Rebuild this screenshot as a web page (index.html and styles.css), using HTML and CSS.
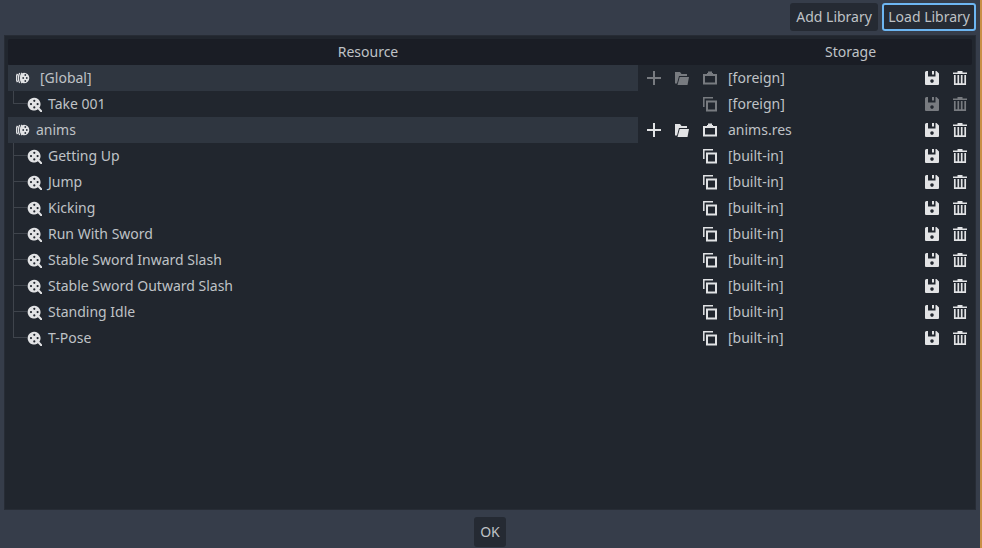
FILE: index.html
```html
<!DOCTYPE html>
<html lang="en">
<head>
<meta charset="utf-8">
<title>Animation Libraries</title>
<link rel="stylesheet" href="styles.css">
</head>
<body>
<svg class="defs" width="0" height="0" aria-hidden="true">
  <defs>
    <symbol id="i-anim" viewBox="0 0 16 16">
      <path fill="currentColor" fill-rule="evenodd" d="M7.300 1.800a6.400 6.400 0 0 1 5.100 10l2.600 2.700V16h-1.500l-2.600-2.700A6.400 6.400 0 1 1 7.300 1.800zM7.300 3.700a1.100 1.100 0 1 0 0 2.200 1.100 1.100 0 0 0 0-2.200zM4 7a1.100 1.100 0 1 0 0 2.200A1.100 1.100 0 0 0 4 7zM10.600 7a1.100 1.100 0 1 0 0 2.200 1.100 1.100 0 0 0 0-2.200zM7.300 10.300a1.100 1.100 0 1 0 0 2.200 1.100 1.100 0 0 0 0-2.200z"/>
    </symbol>
    <symbol id="i-lib" viewBox="0 0 16 16">
      <path fill="currentColor" fill-rule="evenodd" d="M8 2.700a5.300 5.300 0 1 1 0 10.600 4 5.300 0 0 1 0-10.600zM9.300 4.100a.9.9 0 1 0 0 1.800.9.9 0 0 0 0-1.800zM7.200 7.100a.9.9 0 1 0 0 1.800.9.9 0 0 0 0-1.800zM10.800 7.100a.9.9 0 1 0 0 1.800.9.9 0 0 0 0-1.800zM9.300 10.100a.9.9 0 1 0 0 1.800.9.9 0 0 0 0-1.800z"/>
      <path fill="none" stroke="currentColor" stroke-width="1.400" d="M6 2.800C4.300 5.500 4.300 10.500 6 13.200M3.700 3C2 5.700 2 10.300 3.700 13M1.500 3.800C.2 6.200.2 9.800 1.500 12.200"/>
    </symbol>
    <symbol id="i-plus" viewBox="0 0 16 16">
      <path fill="none" stroke="currentColor" stroke-width="2" d="M8 1v14M1 8h14"/>
    </symbol>
    <symbol id="i-folder" viewBox="0 0 16 16">
      <path fill="currentColor" d="M1 2h5l1.500 2H13v2H5L3 13.500H1z"/>
      <path fill="currentColor" d="M5.700 7H15l-1.500 8H3.500z"/>
    </symbol>
    <symbol id="i-paste" viewBox="0 0 16 16">
      <path fill="currentColor" fill-rule="evenodd" d="M6 1.500h4V3h1v1h4v10.500H1V4h4V3h1zM3 6v6.500h10V6z"/>
    </symbol>
    <symbol id="i-copy" viewBox="0 0 16 16">
      <path fill="none" stroke="currentColor" stroke-width="2" d="M5 5.500h9v9H5z"/>
      <path fill="none" stroke="currentColor" stroke-width="1.500" d="M11 1.800H1.800V11"/>
    </symbol>
    <symbol id="i-save" viewBox="0 0 16 16">
      <path fill="currentColor" fill-rule="evenodd" d="M2.500 1H4v5.500h7.500V1h1L15 3.500V14a1 1 0 0 1-1 1H2a1 1 0 0 1-1-1V2.500A1.500 1.500 0 0 1 2.500 1zM8 9.300a1.800 1.800 0 1 0 0 3.600 1.800 1.800 0 0 0 0-3.600zM8 1h2v3.500H8z"/>
    </symbol>
    <symbol id="i-trash" viewBox="0 0 16 16">
      <path fill="currentColor" d="M5.500 1h5v1.500H15V4H1V2.500h4.500z"/>
      <path fill="none" stroke="currentColor" stroke-width="1.700" d="M2.800 5v9.200h10.400V5M6.300 5v9M9.700 5v9"/>
    </symbol>
  </defs>
</svg>
<div class="window">
  <div class="topbar">
    <button class="btn btn-add">Add Library</button>
    <button class="btn btn-focus">Load Library</button>
  </div>
  <div class="panel">
    <div class="tree">
      <div class="row head">
        <div class="cell-res">Resource</div>
        <div class="cell-store">Storage</div>
      </div>

      <div class="row">
        <div class="cell-name lib-bg">
          <svg class="ico lib-ico"><use href="#i-lib"/></svg><span class="lib-name">[Global]</span>
        </div>
        <div class="acts dim">
          <svg class="ico"><use href="#i-plus"/></svg><svg class="ico"><use href="#i-folder"/></svg><svg class="ico"><use href="#i-paste"/></svg>
        </div>
        <div class="store">[foreign]</div>
        <div class="end"><svg class="ico"><use href="#i-save"/></svg><svg class="ico"><use href="#i-trash"/></svg></div>
      </div>

      <div class="row">
        <div class="cell-name"><span class="guide first"></span><svg class="ico"><use href="#i-anim"/></svg><span class="anim-name">Take 001</span></div>
        <div class="acts dim"><span class="slot"></span><span class="slot"></span><svg class="ico"><use href="#i-copy"/></svg></div>
        <div class="store">[foreign]</div>
        <div class="end dim"><svg class="ico"><use href="#i-save"/></svg><svg class="ico"><use href="#i-trash"/></svg></div>
      </div>

      <div class="row">
        <div class="cell-name lib-bg">
          <svg class="ico lib-ico"><use href="#i-lib"/></svg><span class="lib-name tight">anims</span>
        </div>
        <div class="acts">
          <svg class="ico"><use href="#i-plus"/></svg><svg class="ico"><use href="#i-folder"/></svg><svg class="ico"><use href="#i-paste"/></svg>
        </div>
        <div class="store">anims.res</div>
        <div class="end"><svg class="ico"><use href="#i-save"/></svg><svg class="ico"><use href="#i-trash"/></svg></div>
      </div>

      <div class="row">
        <div class="cell-name"><span class="guide first"></span><svg class="ico"><use href="#i-anim"/></svg><span class="anim-name">Getting Up</span></div>
        <div class="acts"><span class="slot"></span><span class="slot"></span><svg class="ico"><use href="#i-copy"/></svg></div>
        <div class="store">[built-in]</div>
        <div class="end"><svg class="ico"><use href="#i-save"/></svg><svg class="ico"><use href="#i-trash"/></svg></div>
      </div>
      <div class="row">
        <div class="cell-name"><span class="guide"></span><svg class="ico"><use href="#i-anim"/></svg><span class="anim-name">Jump</span></div>
        <div class="acts"><span class="slot"></span><span class="slot"></span><svg class="ico"><use href="#i-copy"/></svg></div>
        <div class="store">[built-in]</div>
        <div class="end"><svg class="ico"><use href="#i-save"/></svg><svg class="ico"><use href="#i-trash"/></svg></div>
      </div>
      <div class="row">
        <div class="cell-name"><span class="guide"></span><svg class="ico"><use href="#i-anim"/></svg><span class="anim-name">Kicking</span></div>
        <div class="acts"><span class="slot"></span><span class="slot"></span><svg class="ico"><use href="#i-copy"/></svg></div>
        <div class="store">[built-in]</div>
        <div class="end"><svg class="ico"><use href="#i-save"/></svg><svg class="ico"><use href="#i-trash"/></svg></div>
      </div>
      <div class="row">
        <div class="cell-name"><span class="guide"></span><svg class="ico"><use href="#i-anim"/></svg><span class="anim-name">Run With Sword</span></div>
        <div class="acts"><span class="slot"></span><span class="slot"></span><svg class="ico"><use href="#i-copy"/></svg></div>
        <div class="store">[built-in]</div>
        <div class="end"><svg class="ico"><use href="#i-save"/></svg><svg class="ico"><use href="#i-trash"/></svg></div>
      </div>
      <div class="row">
        <div class="cell-name"><span class="guide"></span><svg class="ico"><use href="#i-anim"/></svg><span class="anim-name">Stable Sword Inward Slash</span></div>
        <div class="acts"><span class="slot"></span><span class="slot"></span><svg class="ico"><use href="#i-copy"/></svg></div>
        <div class="store">[built-in]</div>
        <div class="end"><svg class="ico"><use href="#i-save"/></svg><svg class="ico"><use href="#i-trash"/></svg></div>
      </div>
      <div class="row">
        <div class="cell-name"><span class="guide"></span><svg class="ico"><use href="#i-anim"/></svg><span class="anim-name">Stable Sword Outward Slash</span></div>
        <div class="acts"><span class="slot"></span><span class="slot"></span><svg class="ico"><use href="#i-copy"/></svg></div>
        <div class="store">[built-in]</div>
        <div class="end"><svg class="ico"><use href="#i-save"/></svg><svg class="ico"><use href="#i-trash"/></svg></div>
      </div>
      <div class="row">
        <div class="cell-name"><span class="guide"></span><svg class="ico"><use href="#i-anim"/></svg><span class="anim-name">Standing Idle</span></div>
        <div class="acts"><span class="slot"></span><span class="slot"></span><svg class="ico"><use href="#i-copy"/></svg></div>
        <div class="store">[built-in]</div>
        <div class="end"><svg class="ico"><use href="#i-save"/></svg><svg class="ico"><use href="#i-trash"/></svg></div>
      </div>
      <div class="row">
        <div class="cell-name"><span class="guide"></span><svg class="ico"><use href="#i-anim"/></svg><span class="anim-name">T-Pose</span></div>
        <div class="acts"><span class="slot"></span><span class="slot"></span><svg class="ico"><use href="#i-copy"/></svg></div>
        <div class="store">[built-in]</div>
        <div class="end"><svg class="ico"><use href="#i-save"/></svg><svg class="ico"><use href="#i-trash"/></svg></div>
      </div>
    </div>
  </div>
  <div class="footer"><button class="btn ok">OK</button></div>
</div>
</body>
</html>
```
FILE: styles.css
```css
* { box-sizing: border-box; }
html, body { margin: 0; height: 100%; }
body {
  background: #363d4a;
  font-family: "Noto Sans", sans-serif;
  font-size: 14px;
  color: #bfc2c6;
  overflow: hidden;
}
.defs { position: absolute; }
.window {
  width: 982px;
  height: 548px;
  display: flex;
  flex-direction: column;
  border-right: 2px solid #c98f45;
  padding: 3px 4px 0 4px;
}
.topbar {
  height: 28px;
  display: flex;
  justify-content: flex-end;
  gap: 4px;
}
.btn {
  height: 28px;
  padding: 0 6px;
  border: 0;
  border-radius: 3px;
  background: #252a33;
  color: #bfc2c6;
  font: inherit;
  line-height: 26px;
}
.btn-add { width: 88px; text-align: left; white-space: nowrap; }
.btn-focus {
  background: #262b34;
  box-shadow: inset 0 0 0 2px #6db6f2;
}
.panel {
  margin-top: 4px;
  height: 475px;
  background: #21262e;
  padding: 4px;
  box-shadow: inset 0 0 0 1px #272c35;
}
.tree { display: flex; flex-direction: column; }
.row {
  height: 26px;
  display: flex;
  align-items: center;
  line-height: 26px;
}
.head {
  background: #1a1d25;
  border-radius: 2px;
}
.cell-res { flex: none; width: 720px; text-align: center; }
.cell-store { flex: none; width: 244px; padding-left: 1px; text-align: center; }
.cell-name {
  width: 630px;
  height: 26px;
  display: flex;
  align-items: center;
  position: relative;
  padding-left: 19px;
}
.lib-bg { background: #2f3640; padding-left: 8px; }
.ico {
  display: block;
  width: 16px;
  height: 16px;
  color: #e2e3e5;
  flex: none;
}
.lib-name { margin-left: 8px; }
.tight { margin-left: 4px; }
.anim-name { margin-left: 5px; }
.guide {
  position: absolute;
  left: 5px;
  top: -13px;
  width: 14px;
  height: 26px;
  border-left: 1px solid #3f444c;
  border-bottom: 1px solid #3f444c;
}
.guide.first { top: 0; height: 13px; }
.acts {
  width: 84px;
  padding-left: 8px;
  display: flex;
  gap: 12px;
}
.slot { width: 16px; height: 16px; }
.dim .ico { opacity: .45; }
.store { width: 194px; padding-left: 6px; }
.end {
  flex: 1;
  display: flex;
  gap: 12px;
  padding-left: 8px;
}
.footer {
  flex: 1;
  display: flex;
  justify-content: center;
  padding-top: 7px;
}
.ok { width: 32px; height: 30px; padding: 0; }
```
